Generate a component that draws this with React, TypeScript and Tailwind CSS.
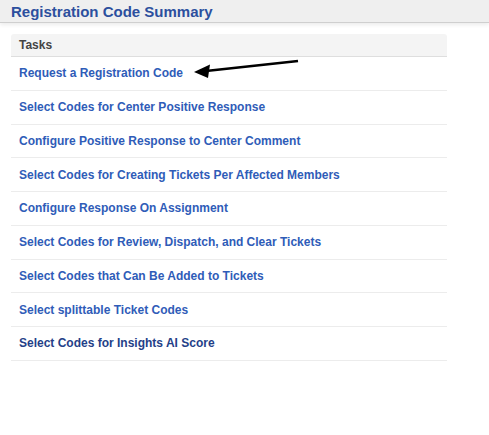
export default function App() {
  const tasks = [
    "Request a Registration Code",
    "Select Codes for Center Positive Response",
    "Configure Positive Response to Center Comment",
    "Select Codes for Creating Tickets Per Affected Members",
    "Configure Response On Assignment",
    "Select Codes for Review, Dispatch, and Clear Tickets",
    "Select Codes that Can Be Added to Tickets",
    "Select splittable Ticket Codes",
    "Select Codes for Insights AI Score",
  ];

  return (
    <div className="w-[489px] h-[435px] bg-white font-['Liberation_Sans',Arial,sans-serif] relative">
      <div className="h-[23px] bg-[#efefef] border-b border-[#cfcfcf] shadow-[0_2px_4px_rgba(0,0,0,0.08)] pl-[11px] flex items-center">
        <h1 className="text-[15px] font-bold text-[#2c4f9e] leading-none">
          Registration Code Summary
        </h1>
      </div>

      <div className="mt-[11px] ml-[11px] w-[436px]">
        <div className="h-[23px] bg-[#f4f4f4] rounded-t-[3px] border-b border-[#dedede] pl-[8px] flex items-center">
          <span className="text-[12px] font-bold text-[#444]">Tasks</span>
        </div>
        {tasks.map((t, i) => (
          <div
            key={t}
            className="h-[33.75px] border-b border-[#ececec] pl-[8px] flex items-center"
          >
            <a
              href="#"
              className={
                "text-[12px] font-bold " +
                (i === tasks.length - 1 ? "text-[#243f88]" : "text-[#2f5cb8]")
              }
            >
              {t}
            </a>
          </div>
        ))}
      </div>

      {/* annotation arrow */}
      <svg
        className="absolute left-0 top-0 pointer-events-none"
        width="489"
        height="435"
      >
        <line x1="298" y1="61" x2="206" y2="71" stroke="#000" strokeWidth="2.5" />
        <polygon points="194,72 210,64.5 208,78" fill="#000" />
      </svg>
    </div>
  );
}
